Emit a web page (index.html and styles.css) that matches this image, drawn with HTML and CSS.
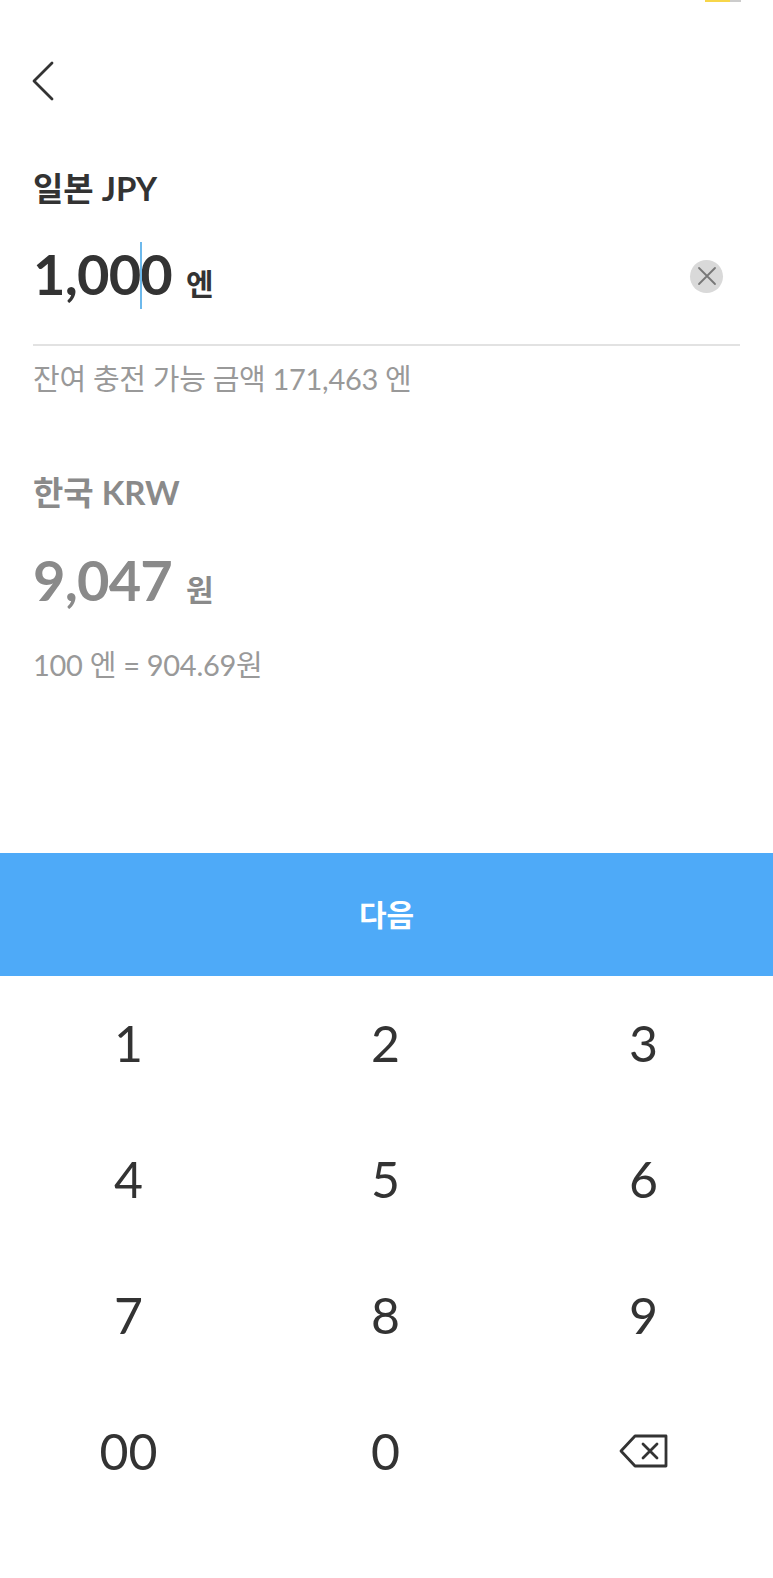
FILE: index.html
```html
<!DOCTYPE html>
<html lang="ko">
<head>
  <meta charset="UTF-8" />
  <meta name="viewport" content="width=device-width, initial-scale=1.0"/>
  <title>충전</title>
  <link rel="stylesheet" href="styles.css">
</head>
<body>
  <div class="status">
    <span class="battery"><span class="battery-level"></span></span>
  </div>

  <header class="top">
    <button class="back" aria-label="뒤로">
      <svg width="24" height="40" viewBox="0 0 24 40"><path d="M21 2 L3 20 L21 38" fill="none" stroke="#333" stroke-width="2.8" stroke-linecap="round" stroke-linejoin="round"/></svg>
    </button>
  </header>

  <section class="from">
    <h2 class="label">일본 JPY</h2>
    <div class="amount-row">
      <div class="amount"><span class="caret-wrap">1,00<i class="caret"></i></span>0<span class="unit">엔</span></div>
      <button class="clear" aria-label="지우기">
        <svg width="20" height="20" viewBox="0 0 20 20"><path d="M2 2 L18 18 M18 2 L2 18" stroke="#777" stroke-width="1.8" stroke-linecap="round"/></svg>
      </button>
    </div>
    <p class="hint">잔여 충전 가능 금액 171,463 엔</p>
  </section>

  <section class="to">
    <h2 class="label">한국 KRW</h2>
    <div class="amount">9,047<span class="unit">원</span></div>
    <p class="hint">100 엔 = 904.69원</p>
  </section>

  <button class="next">다음</button>

  <div class="keypad">
    <button>1</button>
    <button>2</button>
    <button>3</button>
    <button>4</button>
    <button>5</button>
    <button>6</button>
    <button>7</button>
    <button>8</button>
    <button>9</button>
    <button>00</button>
    <button>0</button>
    <button aria-label="지우기">
      <svg width="50" height="34" viewBox="0 0 50 34"><path d="M16 2 H47 V32 H16 L2 17 Z M24 10 L38 24 M38 10 L24 24" fill="none" stroke="#333" stroke-width="2.8" stroke-linejoin="round" stroke-linecap="round"/></svg>
    </button>
  </div>
</body>
</html>
```

FILE: styles.css
```css
body {
  font-family: Lato, "Noto Sans CJK KR", sans-serif;
  background: #fff;
  color: #333;
  margin: 0;
  height: 1578px;
  overflow: hidden;
}

button {
  font-family: inherit;
  background: none;
  border: none;
  padding: 0;
  cursor: pointer;
}

.status {
  height: 2px;
  padding-right: 32px;
  display: flex;
  justify-content: flex-end;
}

.battery {
  width: 36px;
  background: #ccc;
}

.battery-level {
  display: block;
  width: 25px;
  height: 2px;
  background: #f7d64a;
}

.top {
  height: 104px;
  padding: 59px 0 0 31px;
}

.back {
  display: block;
}

.from {
  padding: 0 33px;
  height: 304px;
}

.label {
  margin: 0;
  font-size: 33px;
  line-height: 46px;
  font-weight: 700;
}

.amount-row {
  display: flex;
  justify-content: space-between;
  align-items: center;
  height: 110px;
  margin-top: 23px;
  border-bottom: 2px solid #e2e2e2;
}

.amount {
  font-size: 56px;
  line-height: 70px;
  font-weight: 700;
  letter-spacing: -0.8px;
  padding-bottom: 21px;
}

.unit {
  font-size: 30px;
  margin-left: 14px;
  letter-spacing: 0;
}

.caret-wrap {
  position: relative;
}

.caret {
  position: absolute;
  right: -2px;
  top: 2px;
  width: 2px;
  height: 67px;
  background: #6db9ec;
}

.clear {
  width: 33px;
  height: 33px;
  border-radius: 50%;
  background: #d9d9d9;
  display: flex;
  align-items: center;
  justify-content: center;
  margin-right: 17px;
  margin-bottom: 26px;
}

.hint {
  margin: 12px 0 0;
  font-size: 29px;
  line-height: 42px;
  color: #999;
  letter-spacing: -0.3px;
}

.to {
  padding: 0 33px;
  height: 384px;
  color: #8a8a8a;
}

.to .amount {
  margin-top: 30px;
  padding: 0;
}

.to .hint {
  margin-top: 20px;
}

.next {
  display: block;
  width: 100%;
  height: 123px;
  padding-bottom: 4px;
  background: #4eaaf8;
  color: #fff;
  font-size: 30px;
  font-weight: 700;
}

.keypad {
  display: grid;
  grid-template-columns: 257px 257px 259px;
  grid-auto-rows: 136px;
}

.keypad button {
  color: #333;
  font-size: 50px;
  padding-bottom: 3px;
  display: flex;
  align-items: center;
  justify-content: center;
}
```
